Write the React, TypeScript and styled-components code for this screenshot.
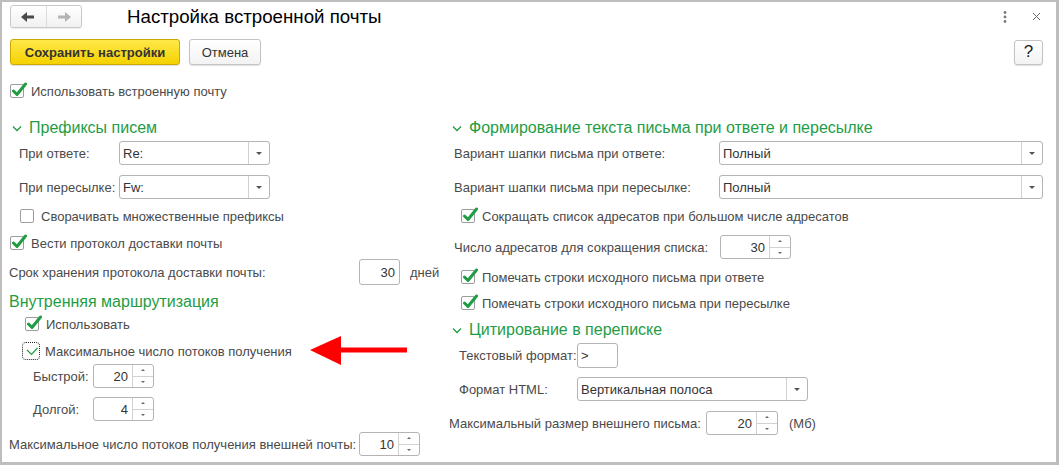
import React, { FunctionComponent } from 'react'
import styled, { createGlobalStyle } from 'styled-components'

const GlobalStyle = createGlobalStyle`
  html, body { margin: 0; padding: 0; background: #fff; }
  body { font-family: 'Liberation Sans', Arial, sans-serif; font-size: 13px; color: #4a4a4a; }
`

const green = '#1f9d45'
const labelColor = '#4a4a4a'
const fieldBorder = '#b4b4b4'

const Frame = styled.div`
  width: 1059px;
  height: 465px;
  box-sizing: border-box;
  border: solid #bdbdbd;
  border-width: 2px 3px 3px 2px;
  background: #fff;
  overflow: hidden;
  display: flex;
  flex-direction: column;
`

const Header = styled.div`
  display: flex;
  align-items: center;
  height: 23px;
  margin: 3px 0 0 8px;
  padding-right: 15px;
`

const NavGroup = styled.div`
  display: flex;
  width: 72px;
  height: 23px;
  box-sizing: border-box;
  border: 1px solid #c9c9c9;
  border-radius: 3px;
  background: linear-gradient(#ffffff, #f1f1f1);
  box-shadow: 0 1px 1px rgba(0, 0, 0, 0.08);
`

const NavButton = styled.div<{ $divider?: boolean }>`
  flex: 1;
  display: flex;
  align-items: center;
  justify-content: center;
  border-left: ${p => (p.$divider ? '1px solid #dcdcdc' : 'none')};
`

const Title = styled.h1`
  margin: 0 0 0 45px;
  font-size: 18.7px;
  font-weight: normal;
  color: #000;
  flex: 1;
  line-height: 23px;
`

const HeaderIcons = styled.div`
  display: flex;
  align-items: center;
  gap: 25px;
`

const Toolbar = styled.div`
  display: flex;
  align-items: center;
  gap: 9px;
  margin: 11px 0 0 8px;
  padding-right: 13px;
  height: 26px;
`

const Button = styled.div<{ $primary?: boolean; $w: number; $h?: number }>`
  box-sizing: border-box;
  width: ${p => p.$w}px;
  height: ${p => p.$h || 26}px;
  display: flex;
  align-items: center;
  justify-content: center;
  border-radius: 3px;
  font-size: 13px;
  color: #333;
  border: 1px solid ${p => (p.$primary ? '#c9a900' : '#c3c3c3')};
  background: ${p => (p.$primary ? 'linear-gradient(#ffe94a, #f5d100)' : 'linear-gradient(#ffffff, #f3f3f3)')};
  font-weight: ${p => (p.$primary ? 'bold' : 'normal')};
  box-shadow: 0 1px 1px rgba(0, 0, 0, 0.12);
`

const HelpButton = styled(Button)`
  margin-left: auto;
  font-size: 17px;
  color: #222;
`

const TopCheckRow = styled.div`
  display: flex;
  align-items: center;
  height: 24px;
  margin: 14px 0 0 8px;
`

const Columns = styled.div`
  display: grid;
  grid-template-columns: 440px 1fr;
  margin-top: 14px;
  padding-left: 7px;
`

const Column = styled.div`
  display: flex;
  flex-direction: column;
`

const Row = styled.div<{ $mt?: number; $indent?: number; $h?: number }>`
  display: flex;
  align-items: center;
  height: ${p => p.$h || 24}px;
  margin-top: ${p => p.$mt || 0}px;
  padding-left: ${p => p.$indent || 0}px;
  white-space: nowrap;
`

const SectionTitle = styled.div<{ $mt?: number; $indent?: number; $h?: number }>`
  display: flex;
  align-items: center;
  gap: 7px;
  height: ${p => p.$h || 22}px;
  margin-top: ${p => p.$mt || 0}px;
  padding-left: ${p => p.$indent || 0}px;
  font-size: 16px;
  color: ${green};
  white-space: nowrap;
`

const Label = styled.span<{ $w?: number }>`
  color: ${labelColor};
  width: ${p => (p.$w ? `${p.$w}px` : 'auto')};
  flex: none;
`

const Suffix = styled.span<{ $ml: number }>`
  color: ${labelColor};
  margin-left: ${p => p.$ml}px;
`

const CheckWrap = styled.label`
  display: flex;
  align-items: center;
  color: ${labelColor};
`

const Box = styled.span<{ $focus?: boolean }>`
  position: relative;
  width: 14px;
  height: 14px;
  box-sizing: border-box;
  border: 1px solid ${p => (p.$focus ? 'transparent' : '#9c9c9c')};
  border-radius: 2px;
  background: #fff;
  margin-right: 7px;
  flex: none;
  outline: ${p => (p.$focus ? '1px dotted #222' : 'none')};
  outline-offset: 1px;
  svg { position: absolute; left: 0; top: -3px; }
`

const Field = styled.div<{ $w: number; $h?: number }>`
  box-sizing: border-box;
  width: ${p => p.$w}px;
  height: ${p => p.$h || 24}px;
  border: 1px solid ${fieldBorder};
  border-radius: 3px;
  background: #fff;
  display: flex;
  color: #333;
  flex: none;
`

const FieldText = styled.div<{ $right?: boolean }>`
  flex: 1;
  display: flex;
  align-items: center;
  justify-content: ${p => (p.$right ? 'flex-end' : 'flex-start')};
  padding: 0 4px 0 3px;
  font-size: 13px;
`

const DropButton = styled.div`
  width: 20px;
  border-left: 1px solid #d2d2d2;
  display: flex;
  align-items: center;
  justify-content: center;
  &::after {
    content: '';
    border-left: 3px solid transparent;
    border-right: 3px solid transparent;
    border-top: 3px solid #555;
  }
`

const SpinButtons = styled.div`
  width: 20px;
  border-left: 1px solid #d2d2d2;
  display: flex;
  flex-direction: column;
`

const SpinHalf = styled.div<{ $down?: boolean }>`
  flex: 1;
  display: flex;
  align-items: center;
  justify-content: center;
  border-top: ${p => (p.$down ? '1px solid #d2d2d2' : 'none')};
  &::after {
    content: '';
    border-left: 2px solid transparent;
    border-right: 2px solid transparent;
    ${p => (p.$down ? 'border-top: 2px solid #666;' : 'border-bottom: 2px solid #666;')}
  }
`

const Check: FunctionComponent<{ checked?: boolean; focus?: boolean; text: string }> = ({ checked, focus, text }) => (
  <CheckWrap>
    <Box $focus={focus}>
      {checked && (
        <svg width='17' height='16' viewBox='0 0 17 16'>
          <path d='M2.5 9 L6 12.5 L14.5 2' fill='none' stroke={green} strokeWidth='3' strokeLinecap='round' strokeLinejoin='round' />
        </svg>
      )}
      {focus && (
        <svg width='14' height='16' viewBox='0 0 14 16'>
          <path d='M2 8 L6.5 12.5 L12.5 6' fill='none' stroke={green} strokeWidth='1.2' />
        </svg>
      )}
    </Box>
    {text}
  </CheckWrap>
)

const Combo: FunctionComponent<{ w: number; value: string }> = ({ w, value }) => (
  <Field $w={w}>
    <FieldText>{value}</FieldText>
    <DropButton />
  </Field>
)

const Spin: FunctionComponent<{ w: number; value: string; h?: number; noButtons?: boolean }> = ({ w, value, h, noButtons }) => (
  <Field $w={w} $h={h}>
    <FieldText $right>{value}</FieldText>
    {!noButtons && (
      <SpinButtons>
        <SpinHalf />
        <SpinHalf $down />
      </SpinButtons>
    )}
  </Field>
)

const Chevron = () => (
  <svg width='10' height='7' viewBox='0 0 10 7'>
    <polyline points='1,1.5 5,5.5 9,1.5' fill='none' stroke={green} strokeWidth='1.3' />
  </svg>
)

const RedArrow = styled.svg`
  margin-left: 18px;
  flex: none;
`

export default function App() {
  return (
    <>
      <GlobalStyle />
      <Frame>
        <Header>
          <NavGroup>
            <NavButton>
              <svg width='14' height='10' viewBox='0 0 14 10'>
                <path d='M0 5 L6 0 L6 3.5 L13 3.5 L13 6.5 L6 6.5 L6 10 Z' fill='#4a4a4a' />
              </svg>
            </NavButton>
            <NavButton $divider>
              <svg width='14' height='10' viewBox='0 0 14 10'>
                <path d='M14 5 L8 0 L8 3.5 L1 3.5 L1 6.5 L8 6.5 L8 10 Z' fill='#b5b5b5' />
              </svg>
            </NavButton>
          </NavGroup>
          <Title>Настройка встроенной почты</Title>
          <HeaderIcons>
            <svg width='4' height='12' viewBox='0 0 4 12'>
              <circle cx='2' cy='1.5' r='1.4' fill='#7a7a7a' />
              <circle cx='2' cy='6' r='1.4' fill='#7a7a7a' />
              <circle cx='2' cy='10.5' r='1.4' fill='#7a7a7a' />
            </svg>
            <svg width='9' height='9' viewBox='0 0 9 9'>
              <path d='M1 1 L8 8 M8 1 L1 8' stroke='#666' strokeWidth='1' />
            </svg>
          </HeaderIcons>
        </Header>

        <Toolbar>
          <Button $primary $w={170}>Сохранить настройки</Button>
          <Button $w={72}>Отмена</Button>
          <HelpButton $w={29} $h={25}>?</HelpButton>
        </Toolbar>

        <TopCheckRow>
          <Check checked text='Использовать встроенную почту' />
        </TopCheckRow>

        <Columns>
          <Column>
            <SectionTitle $indent={3}><Chevron />Префиксы писем</SectionTitle>
            <Row $mt={2} $indent={10}>
              <Label $w={100}>При ответе:</Label>
              <Combo w={151} value='Re:' />
            </Row>
            <Row $mt={10} $indent={10}>
              <Label $w={100}>При пересылке:</Label>
              <Combo w={151} value='Fw:' />
            </Row>
            <Row $mt={5} $indent={11}>
              <Check text='Сворачивать множественные префиксы' />
            </Row>
            <Row $mt={3} $indent={1}>
              <Check checked text='Вести протокол доставки почты' />
            </Row>
            <Row $mt={4} $h={26}>
              <Label $w={350}>Срок хранения протокола доставки почты:</Label>
              <Spin w={41} h={26} value='30' noButtons />
              <Suffix $ml={10}>дней</Suffix>
            </Row>
            <SectionTitle $mt={7} $h={20}>Внутренняя маршрутизация</SectionTitle>
            <Row $indent={16}>
              <Check checked text='Использовать' />
            </Row>
            <Row $mt={3} $indent={15}>
              <Check focus text='Максимальное число потоков получения' />
              <RedArrow width='97' height='30' viewBox='0 0 97 30'>
                <polygon points='0,14 31,0 31,29' fill='#f00' />
                <rect x='29' y='11.5' width='68' height='5' fill='#f00' />
              </RedArrow>
            </Row>
            <Row $mt={1} $indent={24}>
              <Label $w={60}>Быстрой:</Label>
              <Spin w={61} value='20' />
            </Row>
            <Row $mt={9} $indent={24}>
              <Label $w={60}>Долгой:</Label>
              <Spin w={61} value='4' />
            </Row>
            <Row $mt={11}>
              <Label $w={350}>Максимальное число потоков получения внешней почты:</Label>
              <Spin w={61} value='10' />
            </Row>
          </Column>

          <Column>
            <SectionTitle $indent={3}><Chevron />Формирование текста письма при ответе и пересылке</SectionTitle>
            <Row $mt={2} $indent={5}>
              <Label $w={265}>Вариант шапки письма при ответе:</Label>
              <Combo w={324} value='Полный' />
            </Row>
            <Row $mt={10} $indent={5}>
              <Label $w={265}>Вариант шапки письма при пересылке:</Label>
              <Combo w={324} value='Полный' />
            </Row>
            <Row $mt={5} $indent={12}>
              <Check checked text='Сокращать список адресатов при большом числе адресатов' />
            </Row>
            <Row $mt={7} $indent={5}>
              <Label $w={266}>Число адресатов для сокращения списка:</Label>
              <Spin w={71} value='30' />
            </Row>
            <Row $mt={6} $indent={12}>
              <Check checked text='Помечать строки исходного письма при ответе' />
            </Row>
            <Row $mt={2} $indent={12}>
              <Check checked text='Помечать строки исходного письма при пересылке' />
            </Row>
            <SectionTitle $mt={4} $indent={3}><Chevron />Цитирование в переписке</SectionTitle>
            <Row $mt={2} $indent={10} $h={25}>
              <Label $w={118}>Текстовый формат:</Label>
              <Field $w={41} $h={25}><FieldText>&gt;</FieldText></Field>
            </Row>
            <Row $mt={9} $indent={10}>
              <Label $w={118}>Формат HTML:</Label>
              <Combo w={231} value='Вертикальная полоса' />
            </Row>
            <Row $mt={10}>
              <Label $w={257}>Максимальный размер внешнего письма:</Label>
              <Spin w={72} value='20' />
              <Suffix $ml={11}>(Мб)</Suffix>
            </Row>
          </Column>
        </Columns>
      </Frame>
    </>
  )
}
